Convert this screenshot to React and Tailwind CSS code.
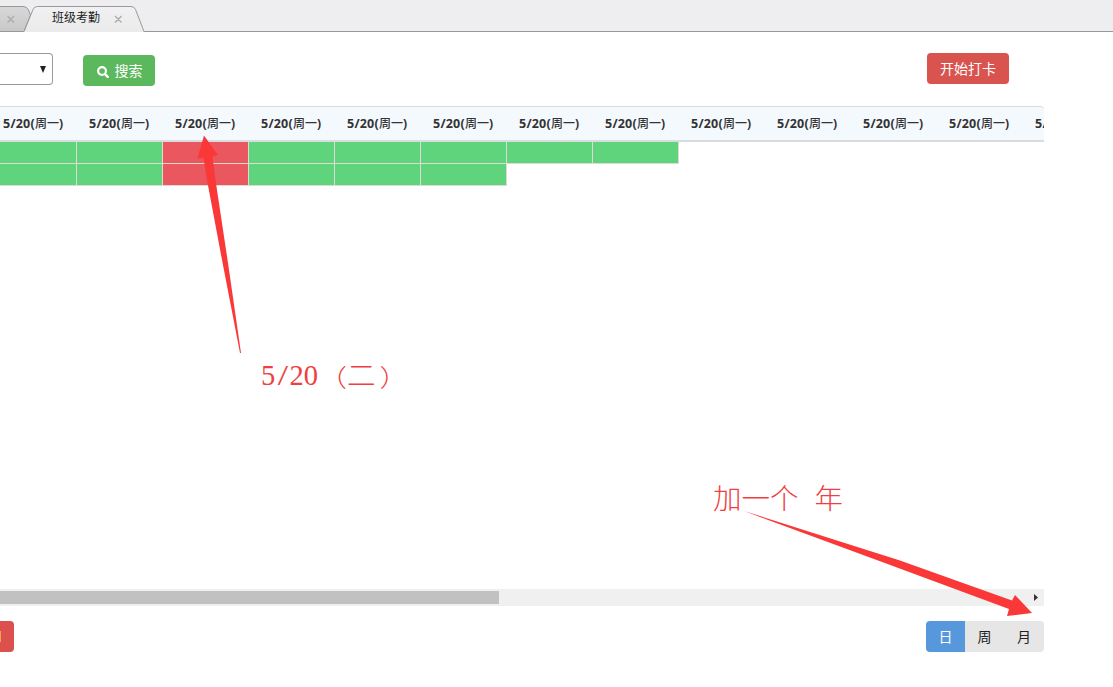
const columns = Array.from({ length: 13 }, (_, i) => i);
const attendance = [
  ["ok", "ok", "absent", "ok", "ok", "ok", "ok", "ok"],
  ["ok", "ok", "absent", "ok", "ok", "ok"],
];

function Tabs() {
  return (
    <header className="relative h-8 w-full bg-[#eeedf0]">
      <svg className="block h-8 w-full" viewBox="0 0 1113 32" fill="none">
        <defs>
          <linearGradient id="idle" x1="0" y1="0" x2="0" y2="1">
            <stop offset="0" stopColor="#d8d8d8" />
            <stop offset="1" stopColor="#c8c8c8" />
          </linearGradient>
          <linearGradient id="current" x1="0" y1="0" x2="0" y2="1">
            <stop offset="0" stopColor="#f1f0f2" />
            <stop offset="1" stopColor="#ebebeb" />
          </linearGradient>
        </defs>
        <path d="M-2 6.5H23Q27 6.5 28.5 10L30.5 15L24 31.5H-2Z" fill="url(#idle)" stroke="#999" />
        <path d="M0 31.5H24M143 31.5H1113" stroke="#999" />
        <path d="M24 32L33 9.5Q34.2 6.5 37.5 6.5H131Q134.3 6.5 135.5 9.5L144 32Z" fill="url(#current)" />
        <path d="M24 31.5L33 9.5Q34.2 6.5 37.5 6.5H131Q134.3 6.5 135.5 9.5L144 31.5" stroke="#999" />
        <path d="M7.5 16L14 22.5M14 16L7.5 22.5M115 16L121.5 22.5M121.5 16L115 22.5" stroke="#aaa" strokeWidth="1.3" />
      </svg>
      <span className="absolute top-[10px] left-[52px] text-xs leading-4 whitespace-nowrap text-[#222]">班级考勤</span>
    </header>
  );
}

function Toolbar() {
  return (
    <div className="flex h-[74px] items-start">
      <div className="mt-[21px] flex h-8 w-[53px] items-center justify-end rounded-r border border-l-0 border-[#999] bg-white pr-[6px]">
        <svg className="h-[7px] w-[6px]" viewBox="0 0 6 7">
          <path d="M0 0H6L3 7Z" fill="#222" />
        </svg>
      </div>
      <button className="mt-[23px] ml-[30px] flex h-[31px] w-[72px] items-center justify-center gap-[6px] rounded bg-[#5cb85c] pl-px text-sm text-white">
        <svg className="mt-0.5 h-3 w-3" viewBox="0 0 12 12" fill="none" stroke="white">
          <circle cx="5" cy="5" r="3.9" strokeWidth="2.1" />
          <path d="M8 8L10.7 10.9" strokeWidth="2.5" strokeLinecap="round" />
        </svg>
        <span>搜索</span>
      </button>
      <button className="mt-[21px] ml-[772px] h-[31px] w-[82px] rounded bg-[#d9534f] text-sm text-white">开始打卡</button>
    </div>
  );
}

function AttendanceTable() {
  return (
    <section className="h-[483px] w-[1044px] overflow-hidden">
      <div className="-ml-[10px] flex h-9 w-[1054px] overflow-hidden rounded-tr border-t border-b-2 border-t-[#d3dbe0] border-b-[#d9dcdf] bg-[#f4f9fe]">
        {columns.map((i) => (
          <div key={i} className="flex w-[86px] shrink-0 items-center justify-center pt-px font-['Open_Sans','Noto_Sans_CJK_SC',sans-serif] text-xs font-bold whitespace-nowrap text-[#333]">
            <span className="text-[12.5px] tracking-[0.2px]">5/20(</span>
            <span className="font-medium">周一</span>
            <span>)</span>
          </div>
        ))}
      </div>
      {attendance.map((row, r) => (
        <div key={r} className="-ml-[9px] flex h-[22px]">
          {row.map((state, i) => (
            <div
              key={i}
              className={
                state === "ok"
                  ? "w-[86px] shrink-0 border-r border-b border-[#dcdcd5] bg-[#5fd47c]"
                  : "w-[86px] shrink-0 border-r border-b border-[#dcdcd5] bg-[#ea575f]"
              }
            />
          ))}
        </div>
      ))}
    </section>
  );
}

function Scrollbar() {
  return (
    <div className="flex h-[17px] w-[1044px] items-center justify-between bg-[#f0f0f0] pr-[6px]">
      <div className="h-[13px] w-[499px] bg-[#c1c1c1]" />
      <svg className="h-[7px] w-[4px]" viewBox="0 0 4 7">
        <path d="M0 0L4 3.5L0 7Z" fill="#333" />
      </svg>
    </div>
  );
}

function Footer() {
  return (
    <footer className="mt-[15px] flex w-[1044px] justify-between">
      <button className="flex h-[31px] w-[14px] items-center rounded-r bg-[#dc514e]">
        <span className="h-[11px] w-px bg-[#f0a44f]" />
      </button>
      <div className="flex h-[31px] overflow-hidden rounded text-sm text-[#222]">
        <button className="w-[39px] bg-[#5797dc] text-white">日</button>
        <button className="w-[39px] bg-[#e6e6e6]">周</button>
        <button className="w-10 bg-[#e6e6e6]">月</button>
      </div>
    </footer>
  );
}

function Annotations() {
  return (
    <div className="pointer-events-none absolute inset-0 font-['Liberation_Serif','Noto_Sans_CJK_SC',serif] text-[28.5px] leading-8 font-light text-[#ee3f42]">
      <svg className="absolute inset-0 h-full w-full" viewBox="0 0 1113 687" fill="#fb3838">
        <path d="M204 135.5L218 155L212.5 156.5L215.5 180L228 263L241 353L240 353L220.5 252L207 180L203.5 158L197.5 158.5Z" />
        <path d="M744 511L900 560.5L1012 600.5L1015 595L1032 613L1007 616L1009 609L897 567.5Z" />
      </svg>
      <div className="absolute top-[360px] left-[261px] flex whitespace-nowrap">
        <span className="w-[14.5px]">5</span>
        <span className="w-[14px] origin-center scale-x-[1.3] text-center">/</span>
        <span className="w-[29px]">20</span>
        <span className="flex">
          <span className="origin-center translate-y-0.5 scale-y-[0.85]">（</span>
          <span className="translate-y-px">二</span>
          <span className="origin-center translate-x-1 translate-y-0.5 scale-y-[0.85]">）</span>
        </span>
      </div>
      <div className="absolute top-[484px] left-[713px] flex gap-[16px] whitespace-nowrap">
        <span>加一个</span>
        <span>年</span>
      </div>
    </div>
  );
}

export default function App() {
  return (
    <main className="relative h-[687px] w-[1113px] overflow-hidden bg-white font-['Liberation_Sans','Noto_Sans_CJK_SC',sans-serif]">
      <Tabs />
      <Toolbar />
      <AttendanceTable />
      <Scrollbar />
      <Footer />
      <Annotations />
    </main>
  );
}
